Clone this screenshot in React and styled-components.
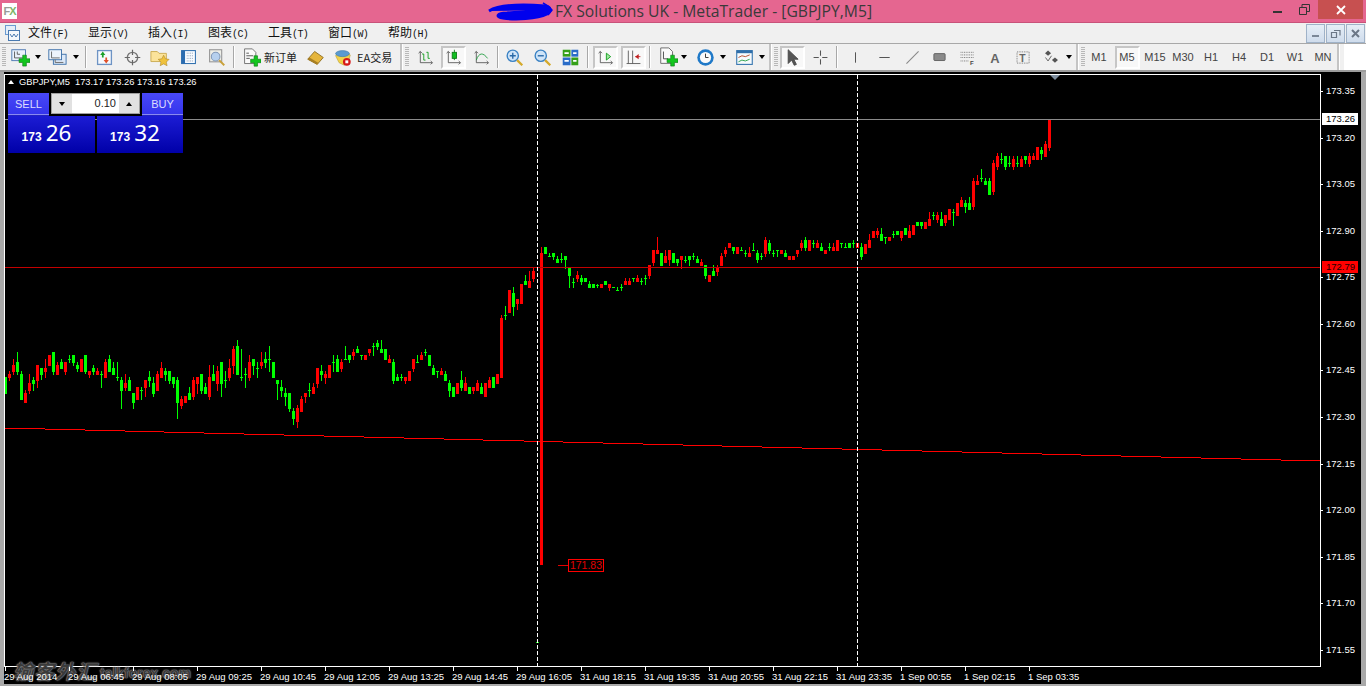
import styled, { createGlobalStyle } from "styled-components";

const GlobalStyle = createGlobalStyle`
  html, body {
    margin: 0;
    height: 100%;
    overflow: hidden;
    background: #f0f0f0;
  }
  #root {
    height: 100%;
  }
`;

// Candles, grouped in runs. Values are in thirds of a pixel from the run's base y:
// colour + bodyTop,bodyBottom,wickTop,wickBottom
const RUNS = [
  {
    first: 0,
    base: 330,
    bars: `g141,192,141,192 r132,144,123,153 r105,126,87,135 g96,126,66,135 g132,210,123,210 r189,219,180,219 r159,183,132,192 g150,162,141,183 r105,153,105,174 g114,135,114,150
      r114,126,87,144 r75,108,75,108 g66,126,66,135 r105,135,96,135 g96,117,87,117 r96,126,96,135 g88,88,75,99 g75,99,75,108 g105,117,96,126 r87,126,87,126
      g75,126,75,132 r123,135,123,144 g114,126,105,135 r123,135,114,135 g132,132,123,174 r96,144,87,144 g87,126,75,126 g114,135,96,135 g141,141,96,153 g150,183,141,237
      r159,174,132,183 g150,183,141,183 g189,219,189,237 r171,210,171,210 g180,180,171,210 r150,174,150,201 g141,153,123,171 g159,192,141,201 r132,183,123,183 r114,144,96,144
      g123,135,114,153 g123,153,123,162 g141,162,141,174 g150,219,141,267 r207,228,198,237 r198,219,198,219 g189,210,171,210 r150,201,141,210 r141,162,141,192 g132,183,132,192
      g171,192,159,192 r141,201,105,210 g132,153,105,153 r123,162,108,183 g96,162,96,201 g150,150,123,174 r114,144,87,153 r57,108,48,132 g48,135,30,135 g141,141,57,153
      g132,132,114,174 r96,144,75,153 g87,108,87,135 g114,114,96,144 r96,108,66,117 g87,99,66,114 g87,87,48,126 g96,144,96,144 g150,162,150,210 g171,183,150,201
      g189,201,174,228 g189,237,189,246 g243,267,234,285 r234,276,225,294 r207,246,198,246 r189,201,189,219 g180,180,159,201 r171,192,159,192 r114,162,114,174 g123,135,105,153
      r132,144,123,162 r105,144,105,144 g96,96,75,126 g87,126,75,126 r96,117,87,126 g88,88,48,90 g75,90,75,99 r66,78,57,90 g57,69,48,69 g75,75,75,90
      r75,90,75,90 r57,69,57,78 g48,48,39,78 g39,51,30,60 g57,69,30,69 g57,90,57,90 r87,99,75,99 g96,153,87,162 g141,153,132,153 g141,141,132,153
      r141,153,141,162 r123,153,123,153 r87,117,87,126 g96,96,75,99 r75,90,66,90 g66,66,57,78 g75,108,75,108 g114,135,105,135 g123,123,123,144 r123,135,114,135
      g132,153,123,153 g159,183,150,201 g171,201,171,201 r159,192,159,192 g150,174,123,183 r159,183,141,183 g171,192,171,192 r171,183,171,192 r159,183,150,183 g171,192,159,192
      r159,201,159,201 r150,174,141,174 g141,174,141,174 r132,162,132,162`,
  },
  {
    first: 124,
    base: 230,
    bars: `r264,444,255,444 g256,256,228,270 r180,249,180,249 g189,231,171,258 r207,222,207,240 r162,222,162,222 g153,165,135,165 r153,174,123,174 r123,147,114,156 g1236,1236,1236,1236
      r69,1005,51,1005 g51,72,51,72 g78,78,69,81 g69,81,69,90 g87,99,78,99 g87,87,69,99 g78,90,78,117 g114,138,114,174 g156,156,144,174 r135,147,123,156
      g144,156,135,165 g144,156,144,156 g162,174,153,174 g162,174,162,174 g164,164,162,174 r162,174,162,174 g153,165,153,165 r162,174,162,183 g172,172,172,172 g181,181,171,183
      g172,172,162,183 r153,165,144,165 r153,165,144,165 g144,144,144,156 r144,156,135,156 g153,153,144,165 g144,144,135,165 r105,138,105,147 r60,99,60,108 r60,72,21,72
      g69,108,69,108 r78,99,60,99 r60,90,60,108 g69,99,69,99 g87,99,87,108 r78,90,78,117 g90,90,78,99 g78,90,78,108 g78,78,69,90 g87,99,78,99
      r96,108,87,108 g105,138,105,147 r135,156,135,156 g123,138,105,138 r111,126,105,138 r78,108,69,108 r60,72,51,81 r39,54,39,54 g51,63,51,72 r51,72,51,72`,
  },
  {
    first: 184,
    base: 110,
    bars: `g421,421,411,421 g429,429,420,441 r429,441,411,441 g420,420,399,423 g429,450,420,459 g438,438,429,450 r390,432,381,441 g399,423,390,432 g429,429,420,441 g420,420,420,441
      r420,432,420,432 g429,441,420,441 r438,450,438,450 r438,450,438,450 r420,432,420,441 r399,414,390,423 g390,414,381,423 r390,423,390,423 g399,399,390,414 r399,414,390,414
      g411,423,399,423 r420,432,420,432 g411,411,399,423 r411,423,399,423 r390,423,390,423 g400,400,400,414 g412,412,399,414 g399,414,399,414 g400,400,390,414 r399,414,399,414
      g411,441,399,450 r402,432,402,432 r390,414,372,414 r363,384,363,384 r363,375,354,384 g372,393,354,393 g382,382,382,402 r381,393,381,393 g372,372,363,384 g363,375,363,375
      r363,384,363,393 g354,375,354,375 r363,384,345,384 r345,375,345,375 g336,348,336,348 g336,348,336,357 r336,357,336,357 r327,348,306,348 g315,315,306,330 r315,330,306,339
      g327,348,306,348 r315,339,315,348 r297,330,297,330 g306,306,297,348 r279,318,279,318 r270,291,261,291 g279,291,270,309 g279,300,261,300 r213,291,204,300 r213,225,195,225
      g205,205,177,216 g213,225,204,225 g213,255,204,255 r159,246,150,255 r138,171,129,180 g147,147,129,162 g138,171,138,180 g160,160,138,171 r147,171,138,180 g160,160,138,171
      r147,171,138,171 g138,150,138,162 r138,162,129,171 r138,150,129,150 r111,150,111,150 g120,132,111,150 r102,141,93,141 r27,114,27,123`,
  },
];

const CANDLES = RUNS.flatMap((run) =>
  run.bars
    .trim()
    .split(/\s+/)
    .map((s, n) => {
      const [top, bottom, high, low] = s.slice(1).split(",").map((v) => Math.round(run.base + Number(v) / 3));
      return { x: 5 + (run.first + n) * 4, color: s[0] === "g" ? "#00ff00" : "#ff0000", top, bottom, high, low };
    })
);

const PRICES = ["173.35", "173.20", "173.05", "172.90", "172.75", "172.60", "172.45", "172.30", "172.15", "172.00", "171.85", "171.70", "171.55"];

const TIMES = [
  "29 Aug 2014", "29 Aug 06:45", "29 Aug 08:05", "29 Aug 09:25", "29 Aug 10:45", "29 Aug 12:05", "29 Aug 13:25", "29 Aug 14:45",
  "29 Aug 16:05", "31 Aug 18:15", "31 Aug 19:35", "31 Aug 20:55", "31 Aug 22:15", "31 Aug 23:35", "1 Sep 00:55", "1 Sep 02:15", "1 Sep 03:35",
];

const Page = styled.div`
  height: 686px;
  width: 1366px;
  display: flex;
  flex-direction: column;
  overflow: hidden;
  font-family: "Liberation Sans", sans-serif;
`;

const TitleBar = styled.div`
  height: 22px;
  flex: none;
  display: flex;
  align-items: flex-start;
  background: #e56690;
  border-bottom: 1px solid #c8527a;
`;

const AppLogo = styled.div`
  width: 15px;
  height: 16px;
  margin: 3px 0 0 2px;
  background: #fff;
  font: bold 11px/16px "Liberation Sans", sans-serif;
  text-align: center;
  color: #9a9a9a;
  letter-spacing: -1px;
  b {
    color: #7fb56a;
  }
`;

const TitleText = styled.div`
  margin-left: 470px;
  height: 22px;
  display: flex;
  align-items: center;
  gap: 1px;
  font: 15.7px/22px "Open Sans", sans-serif;
  color: #3a3a3a;
  white-space: nowrap;
`;

const WindowControls = styled.div`
  margin-left: auto;
  display: flex;
  align-items: flex-start;
`;

const CaptionButton = styled.div`
  width: ${(p) => p.$w}px;
  height: 19px;
  display: flex;
  align-items: center;
  justify-content: center;
  background: ${(p) => (p.$close ? "#c75050" : "transparent")};
`;

const MenuBar = styled.div`
  height: 20px;
  flex: none;
  display: flex;
  align-items: center;
  background: #f0f0f0;
  border-bottom: 1px solid #a8a8a8;
  position: relative;
`;

const MenuIcon = styled.div`
  width: 28px;
  padding-left: 5px;
  box-sizing: border-box;
  display: flex;
`;

const MenuItem = styled.div`
  width: 60px;
  height: 20px;
  font: 12px/18px "Noto Sans CJK SC", sans-serif;
  color: #111;
  white-space: nowrap;
  span {
    font: 10px "Liberation Mono", monospace;
    letter-spacing: -0.6px;
  }
`;

const MdiControls = styled.div`
  margin-left: auto;
  display: flex;
  gap: 1px;
  padding-right: 1px;
`;

const MdiButton = styled.div`
  width: 17px;
  height: 17px;
  display: flex;
  align-items: center;
  justify-content: center;
  background: linear-gradient(#e6eef7, #cfdcec);
  border: 1px solid #9fb2c8;
`;

const ToolBar = styled.div`
  height: 26px;
  flex: none;
  display: flex;
  align-items: center;
  background: #f0f0f0;
  padding-left: 2px;
  border-bottom: 2px solid #9c9c9c;
`;

const Grip = styled.div`
  width: 4px;
  height: 20px;
  margin: 0 ${(p) => p.$after ?? 2}px 0 ${(p) => p.$before ?? 0}px;
  flex: none;
  background: repeating-linear-gradient(#b8b8b8 0 1px, transparent 1px 2px);
`;

const BandDivider = styled.div`
  width: 2px;
  height: 26px;
  flex: none;
  margin-left: ${(p) => p.$ml ?? 0}px;
  margin-right: 2px;
  background: #c4c4c4;
  border-right: 1px solid #fff;
`;

const Separator = styled.div`
  width: ${(p) => p.$w}px;
  flex: none;
  height: 22px;
  display: flex;
  justify-content: center;
  &::after {
    content: "";
    width: 1px;
    background: #a8a8a8;
    border-right: 1px solid #fff;
  }
`;

const ToolButton = styled.div`
  width: ${(p) => p.$w ?? 28}px;
  height: 23px;
  margin-left: ${(p) => p.$ml ?? 0}px;
  flex: none;
  box-sizing: border-box;
  display: flex;
  align-items: center;
  justify-content: ${(p) => (p.$label ? "flex-start" : "center")};
  gap: ${(p) => p.$gap ?? 0}px;
  padding-left: ${(p) => (p.$label ? 5 : 0)}px;
  font: 11px "Noto Sans CJK SC", sans-serif;
  color: #222;
  white-space: nowrap;
`;

const PressedFace = styled.div`
  width: 25px;
  height: 23px;
  box-sizing: border-box;
  display: flex;
  align-items: center;
  justify-content: center;
  border: 2px solid;
  border-color: #c6c6c6 #fff #fff #c6c6c6;
  background-color: #f8f8f8;
  background-image: radial-gradient(#e4e4e4 0.6px, transparent 0.7px);
  background-size: 2px 2px;
`;

const DropArrow = styled.div`
  width: ${(p) => p.$w ?? 10}px;
  flex: none;
  display: flex;
  justify-content: center;
  &::after {
    content: "";
    border-left: 3.5px solid transparent;
    border-right: 3.5px solid transparent;
    border-top: 4px solid #000;
  }
`;

const PeriodLabel = styled.span`
  font: 11px "Liberation Sans", sans-serif;
  color: #444;
`;

const ToolbarEnd = styled.div`
  flex: 1;
  height: 26px;
  background: #fff;
  margin-left: 2px;
`;

const ChartFrame = styled.div`
  flex: 1;
  display: flex;
  background: #a9a9a9;
  padding: 0 5px 2px 4px;
  min-height: 0;
`;

const ChartCanvas = styled.div`
  position: relative;
  flex: 1;
  display: grid;
  grid-template-columns: 1317px 40px;
  grid-template-rows: 595px 1fr;
  background: #000;
  padding-top: 0;
  overflow: hidden;
`;

const Plot = styled.div`
  position: relative;
  margin-top: 2px;
  border: 1px solid #fff;
  line-height: 0;
`;

const Candles = styled.svg`
  display: block;
`;

const SymbolLine = styled.div`
  position: absolute;
  left: 3px;
  top: 1px;
  height: 12px;
  display: flex;
  align-items: center;
  gap: 5px;
  font: 9.3px/12px "Liberation Sans", sans-serif;
  color: #fff;
  white-space: nowrap;
  &::before {
    content: "";
    border-left: 3.5px solid transparent;
    border-right: 3.5px solid transparent;
    border-bottom: 4px solid #fff;
    margin-right: 0;
  }
`;

const TradePanel = styled.div`
  position: absolute;
  left: 3px;
  top: 18px;
  width: 175px;
  display: grid;
  grid-template-columns: 87px 86px;
  grid-template-rows: 23px 37px;
  gap: 0 2px;
  line-height: normal;
`;

const OrderHead = styled.div`
  grid-column: 1 / 3;
  display: flex;
  justify-content: space-between;
  align-items: flex-start;
`;

const SideButton = styled.div`
  width: 41px;
  height: 23px;
  box-sizing: border-box;
  padding: 0 4px;
  background: linear-gradient(#4848f8, #3434ec);
  color: #dcdcff;
  font: 11px/22px "Liberation Sans", sans-serif;
  text-align: center;
  border-bottom: 1px solid #2222c0;
  box-shadow: inset 0 -1px 0 #8a8af0;
`;

const LotBox = styled.div`
  width: 89px;
  height: 21px;
  box-sizing: border-box;
  display: grid;
  grid-template-columns: 20px 1fr 20px;
  background: #d8d8d8;
  border: 1px solid #a0a0a0;
`;

const LotStep = styled.div`
  display: flex;
  align-items: center;
  justify-content: center;
  background: #e1e1e1;
  &::after {
    content: "";
    border-left: 3.5px solid transparent;
    border-right: 3.5px solid transparent;
    ${(p) => (p.$up ? "border-bottom: 4px solid #000;" : "border-top: 4px solid #000;")}
  }
`;

const LotValue = styled.div`
  background: #fff;
  text-align: right;
  padding-right: 3px;
  font: 11px/19px "Liberation Sans", sans-serif;
  color: #222;
`;

const QuoteButton = styled.div`
  display: flex;
  align-items: baseline;
  justify-content: center;
  gap: 4px;
  padding: 1px 10px 0 0;
  background: linear-gradient(#1c1cd4, #0000a8);
  color: #fff;
  b {
    font: bold 12px "Liberation Sans", sans-serif;
  }
  span {
    font: 22.5px/32px "Noto Sans", sans-serif;
  }
`;

const TickMark = styled.div`
  position: absolute;
  left: 0;
  width: 2px;
  height: 1px;
  background: #fff;
`;

const PriceAxis = styled.div`
  position: relative;
`;

const PriceLabel = styled.div`
  position: absolute;
  left: 5px;
  font: 9.5px/12px "Liberation Sans", sans-serif;
  color: #fff;
`;

const PriceTag = styled.div`
  position: absolute;
  left: 1px;
  width: 36px;
  height: 12px;
  padding-left: 4px;
  box-sizing: border-box;
  font: 9.5px/12px "Liberation Sans", sans-serif;
  background: ${(p) => p.$bg};
  color: ${(p) => p.$fg};
`;

const TimeAxis = styled.div`
  position: relative;
  z-index: 2;
  grid-column: 1 / 3;
`;

const TimeLabel = styled.div`
  position: absolute;
  top: 4px;
  font: 9.5px/12px "Liberation Sans", sans-serif;
  color: #fff;
  white-space: nowrap;
`;

const TimeTick = styled.div`
  position: absolute;
  top: 0;
  width: 1px;
  height: 4px;
  background: #fff;
`;

const LowPriceNote = styled.div`
  position: absolute;
  left: 563px;
  top: 484px;
  width: 36px;
  height: 13px;
  box-sizing: border-box;
  border: 1px solid #ff0000;
  background: #000;
  color: #e00000;
  font: 10.5px/11px "Liberation Sans", sans-serif;
  text-align: center;
  &::before {
    content: "";
    position: absolute;
    left: -11px;
    top: 5px;
    width: 10px;
    height: 1px;
    background: #e00000;
  }
`;

const ShiftMark = styled.div`
  position: absolute;
  left: 1045px;
  top: 0;
  border-left: 5px solid transparent;
  border-right: 5px solid transparent;
  border-top: 5px solid #7f8fa0;
`;

const Watermark = styled.div`
  position: absolute;
  left: 9px;
  top: 584px;
  height: 30px;
  display: flex;
  align-items: center;
  gap: 3px;
  pointer-events: none;
  color: #3a3a3a;
  text-shadow: 0 0 2px #9a9a9a, 0 0 1px #9a9a9a;
  white-space: nowrap;
`;

const WatermarkCn = styled.span`
  font: italic bold 20px/30px "Noto Sans CJK SC", sans-serif;
  letter-spacing: 1px;
`;

const WatermarkEn = styled.span`
  font: bold 14px "Liberation Sans", sans-serif;
  margin-top: 4px;
`;

const Plus = () => (
  <g>
    <path d="M14 9h4v4h4v4h-4v4h-4v-4h-4v-4h4z" fill="#12c61e" stroke="#0a7a14" strokeWidth=".7" />
  </g>
);

const Axes = ({ c = "#555" }) => <path d="M5 4v13h14M3 6l2-2 2 2M17 15l2 2-2 2" fill="none" stroke={c} />;

const Ico = ({ children, size = 19, box = "0 0 22 22" }) => (
  <svg width={size} height={size} viewBox={box} shapeRendering="geometricPrecision">
    {children}
  </svg>
);

const ICONS = {
  newChart: (
    <Ico size={20}>
      <rect x="2" y="3" width="15" height="12" fill="#eaf1fb" stroke="#4a76b0" />
      <path d="M5 5v7h9M8 8h3M8 5v3" stroke="#555" fill="none" />
      <Plus />
    </Ico>
  ),
  profiles: (
    <Ico size={20}>
      <rect x="7" y="8" width="14" height="11" fill="#dce8f7" stroke="#3a6ea8" />
      <rect x="2" y="3" width="14" height="11" fill="#eef4fc" stroke="#3a6ea8" />
      <path d="M5 5v7h9M9 14v3h9" stroke="#666" fill="none" />
    </Ico>
  ),
  market: (
    <Ico>
      <rect x="3" y="3" width="16" height="16" fill="#f6f9fd" stroke="#6d93c4" strokeWidth="1.5" />
      <path d="M9 4l3 4h-2v3H8V8H6z" fill="#1aa02a" />
      <path d="M13 18l-3-4h2v-3h2v3h2z" fill="#e0502a" />
    </Ico>
  ),
  crosshair: (
    <Ico>
      <circle cx="11" cy="11" r="6" fill="none" stroke="#777" strokeWidth="1.6" />
      <path d="M11 2v6M11 14v6M2 11h6M14 11h6" stroke="#666" strokeWidth="1.4" />
    </Ico>
  ),
  folderStar: (
    <Ico size={20}>
      <path d="M1 5h7l2 2h8v9H1z" fill="#fbe39a" stroke="#c9a94f" />
      <path d="M15 9l2 4 4 .6-3 3 .8 4-3.800-2-3.800 2 .8-4-3-3 4-.6z" fill="#f0c23c" stroke="#a8842a" strokeWidth=".6" />
    </Ico>
  ),
  list: (
    <Ico>
      <rect x="3" y="3" width="16" height="15" fill="#f8fbff" stroke="#2f6fae" strokeWidth="1.2" />
      <rect x="3" y="3" width="4" height="15" fill="#2b6cb0" />
      <path d="M9 6h8M9 9h8M9 12h8M9 15h8" stroke="#7a8ea8" strokeDasharray="1 1" />
    </Ico>
  ),
  tester: (
    <Ico>
      <rect x="3" y="2" width="14" height="14" fill="#efefe8" stroke="#999" strokeWidth="1.3" />
      <circle cx="10" cy="10" r="5" fill="#b6d0ee" stroke="#8098b8" strokeWidth="1.2" />
      <path d="M14 14l6 6" stroke="#c9a13a" strokeWidth="2.2" />
    </Ico>
  ),
  order: (
    <Ico>
      <path d="M3 1h9l4 4v13H3z" fill="#fafafa" stroke="#666" />
      <path d="M5 6h3M5 9h8M5 12h4" stroke="#444" />
      <Plus />
    </Ico>
  ),
  gold: (
    <Ico>
      <path d="M2 13l8-9 10 7-7 8z" fill="#e5b53c" stroke="#8a6a1c" />
      <path d="M2 13l11 6 1-2-10-6z" fill="#a97f22" />
    </Ico>
  ),
  expert: (
    <Ico>
      <path d="M3 9c2-4 14-5 17-1l-2 8-5 4-6-3z" fill="#f2d24a" stroke="#b09530" strokeWidth=".6" />
      <ellipse cx="11" cy="6.500" rx="8" ry="3.500" fill="#5a9ad0" stroke="#35709f" strokeWidth=".6" />
      <circle cx="16" cy="16" r="4.500" fill="#d61818" />
      <rect x="14.300" y="14.300" width="3.400" height="3.400" fill="#fff" />
    </Ico>
  ),
  bars: (
    <Ico>
      <Axes />
      <path d="M9 14V7M9 14h2M9 7H7M14 12V5M14 12h2M14 5h-2" stroke="#0a9a16" fill="none" />
    </Ico>
  ),
  candles: (
    <Ico>
      <Axes />
      <path d="M12 2v12" stroke="#0a7a14" />
      <rect x="9.500" y="5" width="5" height="7" fill="#10c020" stroke="#0a7a14" />
    </Ico>
  ),
  curve: (
    <Ico>
      <Axes />
      <path d="M5 14c3-9 8-9 13-2" stroke="#1a9a3a" fill="none" />
    </Ico>
  ),
  zoomIn: (
    <Ico>
      <circle cx="9" cy="9" r="6.500" fill="#cfe4f8" stroke="#3a82c4" strokeWidth="1.6" />
      <path d="M5.500 9h7M9 5.500v7" stroke="#2a6aa8" strokeWidth="1.6" />
      <path d="M14 14l6 6" stroke="#d4a92c" strokeWidth="2.600" />
    </Ico>
  ),
  zoomOut: (
    <Ico>
      <circle cx="9" cy="9" r="6.500" fill="#cfe4f8" stroke="#3a82c4" strokeWidth="1.6" />
      <path d="M5.500 9h7" stroke="#2a6aa8" strokeWidth="1.6" />
      <path d="M14 14l6 6" stroke="#d4a92c" strokeWidth="2.600" />
    </Ico>
  ),
  tile: (
    <Ico>
      <rect x="2" y="2" width="9" height="8" fill="#35a018" />
      <rect x="12" y="2" width="8" height="8" fill="#2a6cc8" />
      <rect x="2" y="11" width="9" height="9" fill="#2a6cc8" />
      <rect x="12" y="11" width="8" height="9" fill="#35a018" />
      <path d="M4 6h5M14 6h4M4 15h5M14 15h4" stroke="#fff" strokeWidth="2" />
    </Ico>
  ),
  autoScroll: (
    <Ico>
      <Axes />
      <path d="M12 6l5 4-5 4z" fill="#9fe89f" stroke="#0a9a16" />
    </Ico>
  ),
  chartShift: (
    <Ico>
      <path d="M5 3v15M10 3v15M3 18h16" stroke="#555" fill="none" />
      <path d="M13 10h6" stroke="#c02020" />
      <path d="M17 7l-4 3 4 3z" fill="#c02020" />
    </Ico>
  ),
  indicators: (
    <Ico size={20}>
      <path d="M3 1h9l4 4v13H3z" fill="#fafafa" stroke="#666" />
      <path d="M6 5v8h5" stroke="#444" fill="none" />
      <Plus />
    </Ico>
  ),
  clock: (
    <Ico>
      <circle cx="11" cy="11" r="9.500" fill="#1f79c8" />
      <circle cx="11" cy="11" r="6.500" fill="#fafafa" />
      <path d="M11 6.500V11h3.500" stroke="#222" fill="none" />
    </Ico>
  ),
  template: (
    <Ico>
      <rect x="2" y="3" width="18" height="16" fill="#f6fafd" stroke="#3a78b0" strokeWidth="1.3" />
      <rect x="2" y="3" width="18" height="3" fill="#2f6eaa" />
      <path d="M4 11l4-2 4 1 5-2" stroke="#b03a1a" fill="none" />
      <path d="M4 16l4-2 4 1 5-2" stroke="#1a9a3a" fill="none" />
    </Ico>
  ),
  cursor: (
    <Ico>
      <path d="M6 2v16l4-4 3 6 2.500-1-3-6h5z" fill="#555" stroke="#444" />
    </Ico>
  ),
  cross: (
    <Ico>
      <path d="M11 3v6M11 13v6M3 11h6M13 11h6" stroke="#555" strokeWidth="1.2" />
    </Ico>
  ),
  vline: (
    <Ico>
      <path d="M11 5v12" stroke="#555" strokeWidth="1.2" />
    </Ico>
  ),
  hline: (
    <Ico>
      <path d="M5 11h12" stroke="#555" strokeWidth="1.2" />
    </Ico>
  ),
  trend: (
    <Ico>
      <path d="M4 18L18 4" stroke="#888" strokeWidth="1.2" />
    </Ico>
  ),
  rectangle: (
    <Ico>
      <rect x="4.500" y="6.500" width="13" height="8" rx="1" fill="#8a8a8a" stroke="#5a5a5a" />
    </Ico>
  ),
  fibo: (
    <Ico>
      <path d="M3 5h15M3 8h15M3 11h15M3 15h10" stroke="#666" strokeDasharray="1 1" />
      <text x="14" y="20" fontSize="7" fontWeight="bold" fontFamily="Liberation Sans" fill="#444">
        F
      </text>
    </Ico>
  ),
  textA: (
    <Ico>
      <text x="5" y="17" fontSize="15" fontWeight="bold" fontFamily="Liberation Sans" fill="#666">
        A
      </text>
    </Ico>
  ),
  label: (
    <Ico>
      <rect x="3.500" y="4.500" width="14" height="13" fill="none" stroke="#666" strokeDasharray="1 1" />
      <text x="6" y="16" fontSize="12" fontWeight="bold" fontFamily="Liberation Sans" fill="#666">
        T
      </text>
    </Ico>
  ),
  more: (
    <Ico>
      <path d="M7 3l3.500 3L7 9 3.500 6zM15 11l3.500 3-3.500 3-3.500-3z" fill="#555" />
      <path d="M4 11l3 4 4-6" stroke="#555" fill="none" />
    </Ico>
  ),
};

const Btn = ({ name, w, ml, pressed }) => (
  <ToolButton $w={w} $ml={ml}>
    {pressed ? <PressedFace>{ICONS[name]}</PressedFace> : ICONS[name]}
  </ToolButton>
);

const PERIODS = ["M1", "M5", "M15", "M30", "H1", "H4", "D1", "W1", "MN"];

const MENUS = [
  ["文件", "(F)"],
  ["显示", "(V)"],
  ["插入", "(I)"],
  ["图表", "(C)"],
  ["工具", "(T)"],
  ["窗口", "(W)"],
  ["帮助", "(H)"],
];

function ChartPlot() {
  const wick = (c) => <rect key={`w${c.x}`} x={c.x} y={c.high} width="1" height={Math.max(c.low - c.high, 1)} fill={c.color} />;
  const body = (c) => <rect key={`b${c.x}`} x={c.x - 1} y={c.top} width="3" height={Math.max(c.bottom - c.top, 1)} fill={c.color} />;
  return (
    <Candles width="1315" height="591" viewBox="5 75 1315 591" shapeRendering="crispEdges">
      <line x1="5" y1="428" x2="1320" y2="461" stroke="#ff0000" strokeWidth="1" />
      {CANDLES.map(wick)}
      {CANDLES.map(body)}
      <line x1="5" y1="119.500" x2="1320" y2="119.500" stroke="#8a8a8a" />
      <line x1="5" y1="267.500" x2="1320" y2="267.500" stroke="#c40000" />
      <line x1="537.500" y1="75" x2="537.500" y2="666" stroke="#fff" strokeDasharray="4 2" />
      <line x1="857.500" y1="75" x2="857.500" y2="666" stroke="#fff" strokeDasharray="4 2" />
    </Candles>
  );
}

export default function App() {
  return (
    <Page>
      <GlobalStyle />
      <TitleBar>
        <AppLogo>
          F<b>X</b>
        </AppLogo>
        <TitleText>
          <svg width="67" height="22" viewBox="0 0 67 22">
            <path d="M2 11c10-6 30-7 56-5 6 1 7 5 2 8-10 5-32 6-44 4C8 17 10 13 20 13c12-1 26-2 38-3" fill="#0000ee" stroke="#0000ee" strokeWidth="3" />
            <path d="M56 3l5 3 4 4-4 5" fill="none" stroke="#0000ee" strokeWidth="1.5" />
          </svg>
          FX Solutions UK - MetaTrader - [GBPJPY,M5]
        </TitleText>
        <WindowControls>
          <CaptionButton $w={27}>
            <svg width="10" height="10"><rect y="6" width="9" height="2" fill="#333" /></svg>
          </CaptionButton>
          <CaptionButton $w={27}>
            <svg width="11" height="11"><path d="M.5 3.500h7v7h-7zM3 3V.5h7.500v7H8" fill="none" stroke="#333" /></svg>
          </CaptionButton>
          <CaptionButton $w={45} $close>
            <svg width="10" height="10"><path d="M1 1l8 8M9 1l-8 8" stroke="#fff" strokeWidth="1.8" /></svg>
          </CaptionButton>
          <CaptionButton $w={3} />
        </WindowControls>
      </TitleBar>

      <MenuBar>
        <MenuIcon>
          <svg width="15" height="16" viewBox="0 0 15 16">
            <rect x=".5" y=".5" width="10" height="9" fill="#e4eef8" stroke="#6a9ad0" />
            <rect x="3.500" y="5.500" width="11" height="10" fill="#f4f8fc" stroke="#4a7ab0" />
            <path d="M5 9l2 3 2-3 2 3 2-3" stroke="#4a7ab0" fill="none" />
          </svg>
        </MenuIcon>
        {MENUS.map(([cn, key]) => (
          <MenuItem key={key}>
            {cn}
            <span>{key}</span>
          </MenuItem>
        ))}
        <MdiControls>
          <MdiButton>
            <svg width="9" height="9"><rect x="1" y="6" width="7" height="2" fill="#7b8797" /></svg>
          </MdiButton>
          <MdiButton>
            <svg width="11" height="11"><path d="M1.500 4.500h5v5h-5zM4 2.500h6v5" fill="none" stroke="#6b7787" strokeWidth="1.2" /></svg>
          </MdiButton>
          <MdiButton>
            <svg width="9" height="9"><path d="M1 1l7 7M8 1L1 8" stroke="#6b7787" strokeWidth="2" /></svg>
          </MdiButton>
        </MdiControls>
      </MenuBar>

      <ToolBar>
        <Grip />
        <Btn name="newChart" w={23} />
        <DropArrow $w={13} />
        <Btn name="profiles" w={26} />
        <DropArrow $w={12} />
        <Separator $w={8} />
        <Btn name="market" />
        <Btn name="crosshair" />
        <Btn name="folderStar" />
        <Btn name="list" />
        <Btn name="tester" />
        <Separator $w={7} />
        <ToolButton $w={65} $label $gap={3}>
          {ICONS.order}新订单
        </ToolButton>
        <Btn name="gold" w={26} />
        <ToolButton $w={69} $label $gap={5}>
          {ICONS.expert}
          EA交易
        </ToolButton>
        <BandDivider $ml={3} />
        <Grip $after={2} />
        <Btn name="bars" />
        <Btn name="candles" pressed />
        <Btn name="curve" />
        <Separator $w={5} />
        <Btn name="zoomIn" />
        <Btn name="zoomOut" />
        <Btn name="tile" />
        <Separator $w={7} />
        <Btn name="autoScroll" pressed />
        <Btn name="chartShift" pressed />
        <Separator $w={5} />
        <Btn name="indicators" w={24} ml={4} />
        <DropArrow $w={7} />
        <Btn name="clock" ml={4} />
        <DropArrow $w={7} />
        <Btn name="template" ml={4} />
        <DropArrow $w={7} />
        <BandDivider $ml={4} />
        <Grip $after={2} />
        <Btn name="cursor" w={25} pressed />
        <Btn name="cross" ml={1} />
        <Separator $w={6} />
        <Btn name="vline" ml={1} />
        <Btn name="hline" ml={1} />
        <Btn name="trend" />
        <Btn name="rectangle" w={27} />
        <Btn name="fibo" />
        <Btn name="textA" />
        <Btn name="label" />
        <Btn name="more" w={27} ml={1} />
        <DropArrow $w={7} />
        <BandDivider $ml={4} />
        <Grip $after={0} />
        {PERIODS.map((p) => (
          <ToolButton key={p}>{p === "M5" ? <PressedFace><PeriodLabel>{p}</PeriodLabel></PressedFace> : <PeriodLabel>{p}</PeriodLabel>}</ToolButton>
        ))}
        <BandDivider />
        <ToolbarEnd />
      </ToolBar>

      <ChartFrame>
        <ChartCanvas>
          <Plot>
            <ChartPlot />
            <ShiftMark />
            <SymbolLine>
              <span>GBPJPY,M5</span>
              <span>173.17 173.26 173.16 173.26</span>
            </SymbolLine>
            <TradePanel>
              <OrderHead>
                <SideButton>SELL</SideButton>
                <LotBox>
                  <LotStep />
                  <LotValue>0.10</LotValue>
                  <LotStep $up />
                </LotBox>
                <SideButton>BUY</SideButton>
              </OrderHead>
              <QuoteButton>
                <b>173</b>
                <span>26</span>
              </QuoteButton>
              <QuoteButton>
                <b>173</b>
                <span>32</span>
              </QuoteButton>
            </TradePanel>
            <LowPriceNote>171.83</LowPriceNote>
          </Plot>

          <PriceAxis>
            {PRICES.map((p, i) => {
              const y = 91 + i * 46.58 - 72;
              return (
                <div key={p}>
                  <TickMark style={{ top: Math.round(y) }} />
                  <PriceLabel style={{ top: Math.round(y) - 6 }}>{p}</PriceLabel>
                </div>
              );
            })}
            <PriceTag $bg="#fff" $fg="#000" style={{ top: 41 }}>173.26</PriceTag>
            <PriceTag $bg="#ff0000" $fg="#200000" style={{ top: 189 }}>172.79</PriceTag>
          </PriceAxis>

          <TimeAxis>
            {TIMES.map((t, i) => (
              <div key={t}>
                <TimeTick style={{ left: 1 + i * 64 }} />
                <TimeLabel style={{ left: i * 64 }}>{t}</TimeLabel>
              </div>
            ))}
          </TimeAxis>

          <Watermark>
            <WatermarkCn>输客外汇</WatermarkCn>
            <WatermarkEn>talkforex.com</WatermarkEn>
          </Watermark>
        </ChartCanvas>
      </ChartFrame>
    </Page>
  );
}
